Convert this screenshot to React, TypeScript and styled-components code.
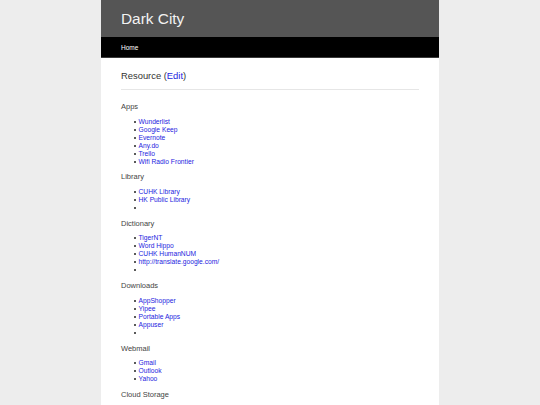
import React from "react";
import styled, { createGlobalStyle } from "styled-components";

const Global = createGlobalStyle`
  html, body { margin: 0; padding: 0; background: #ededed; }
  body { font-family: "Liberation Sans", Arial, sans-serif; }
`;

const Page = styled.div`
  width: 338px;
  margin: 0 auto;
  background: #fff;
  min-height: 405px;
`;

const Header = styled.header`
  background: #555555;
  height: 37px;
  display: flex;
  align-items: center;
  padding: 0 20px;
`;

const Title = styled.h1`
  margin: 0;
  font-weight: normal;
  font-size: 15.4px;
  color: #f2f2f2;
  line-height: 1;
`;

const Nav = styled.nav`
  background: #000;
  height: 20px;
  border-bottom: 1px solid #3a3a3a;
  display: flex;
  align-items: center;
  padding: 0 20px;
`;

const NavLink = styled.a`
  color: #fff;
  font-size: 6.5px;
  text-decoration: none;
`;

const Content = styled.main`
  padding: 12px 20px 0;
`;

const PageTitle = styled.h2`
  margin: 0;
  font-weight: normal;
  font-size: 9.4px;
  line-height: 12px;
  color: #333;
`;

const Rule = styled.hr`
  border: 0;
  border-top: 1px solid #e6e6e6;
  margin: 7px 0 12px;
`;

const Section = styled.h3`
  margin: 6.7px 0;
  font-weight: normal;
  font-size: 7.5px;
  line-height: 9px;
  color: #444;
  &:first-of-type { margin-top: 0; }
`;

const List = styled.ul`
  margin: 6.7px 0;
  padding-left: 12.5px;
  list-style: none;
  font-size: 6.7px;
  line-height: 8px;
  color: #333;
`;

const Item = styled.li`
  display: flex;
  align-items: center;
  min-height: 8px;
  &::before {
    content: "";
    flex: none;
    width: 2px;
    height: 2px;
    border-radius: 50%;
    background: #222;
    margin-right: 3px;
  }
`;

const Link = styled.a`
  color: #1d1de0;
  text-decoration: none;
`;

type Group = { name: string; items: string[]; blank?: boolean };

const groups: Group[] = [
  { name: "Apps", items: ["Wunderlist", "Google Keep", "Evernote", "Any.do", "Trello", "Wifi Radio Frontier"] },
  { name: "Library", items: ["CUHK Library", "HK Public Library"], blank: true },
  { name: "Dictionary", items: ["TigerNT", "Word Hippo", "CUHK HumanNUM", "http://translate.google.com/"], blank: true },
  { name: "Downloads", items: ["AppShopper", "Yipee", "Portable Apps", "Appuser"], blank: true },
  { name: "Webmail", items: ["Gmail", "Outlook", "Yahoo"] },
  { name: "Cloud Storage", items: [] },
];

export default function App() {
  return (
    <>
      <Global />
      <Page>
        <Header>
          <Title>Dark City</Title>
        </Header>
        <Nav>
          <NavLink href="#">Home</NavLink>
        </Nav>
        <Content>
          <PageTitle>
            Resource (<Link href="#">Edit</Link>)
          </PageTitle>
          <Rule />
          {groups.map((g) => (
            <React.Fragment key={g.name}>
              <Section>{g.name}</Section>
              {(g.items.length > 0 || g.blank) && (
                <List>
                  {g.items.map((it) => (
                    <Item key={it}>
                      <Link href="#">{it}</Link>
                    </Item>
                  ))}
                  {g.blank && <Item />}
                </List>
              )}
            </React.Fragment>
          ))}
        </Content>
      </Page>
    </>
  );
}
